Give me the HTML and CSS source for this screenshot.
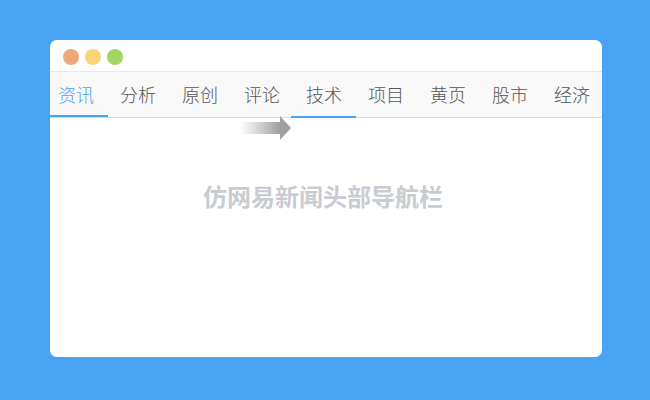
FILE: index.html
```
<!DOCTYPE html>
<html lang="zh-CN">
<head>
    <meta charset="UTF-8">
    <meta name="viewport" content="width=device-width, initial-scale=1.0">
    <title>仿网易新闻头部导航栏</title>
    <link rel="stylesheet" href="styles.css">
</head>
<body>
    <div class="window">
        <div class="title-bar">
            <span class="dot red"></span>
            <span class="dot yellow"></span>
            <span class="dot green"></span>
        </div>
        <nav class="nav">
            <a href="#" class="active">资讯</a>
            <a href="#">分析</a>
            <a href="#">原创</a>
            <a href="#">评论</a>
            <a href="#" class="current">技术
                <svg class="arrow" width="50" height="24" viewBox="0 0 50 24">
                    <defs>
                        <linearGradient id="fade">
                            <stop offset="0" stop-color="#a0a0a0" stop-opacity="0"/>
                            <stop offset="1" stop-color="#a0a0a0"/>
                        </linearGradient>
                    </defs>
                    <rect x="0" y="6" width="39" height="12" fill="url(#fade)"/>
                    <path d="M39 0L50 12L39 24Z" fill="#a0a0a0"/>
                </svg>
            </a>
            <a href="#">项目</a>
            <a href="#">黄页</a>
            <a href="#">股市</a>
            <a href="#">经济</a>
        </nav>
        <main class="content">
            <h1>仿网易新闻头部导航栏</h1>
        </main>
    </div>
</body>
</html>
```
FILE: styles.css
```
* {
    box-sizing: border-box;
}
body {
    margin: 0;
    padding: 40px 48px 43px 50px;
    min-height: 100vh;
    display: flex;
    background: #48a3f3;
    font-family: "Noto Sans CJK SC", sans-serif;
}
.window {
    flex: 1;
    background: #fff;
    border-radius: 7px;
    overflow: hidden;
}
.title-bar {
    display: flex;
    align-items: center;
    gap: 6px;
    height: 31px;
    padding: 3px 13px 0;
}
.dot {
    width: 16px;
    height: 16px;
    border-radius: 50%;
}
.red {
    background: #efa779;
}
.yellow {
    background: #f9d576;
}
.green {
    background: #a4d663;
}
.nav {
    display: flex;
    justify-content: space-between;
    padding: 0 12px 0 8px;
    background: #f9f9f9;
    border-top: 1px solid #e8e8e8;
    border-bottom: 1px solid #dcdcdc;
}
.nav a {
    position: relative;
    font-size: 18px;
    font-weight: 300;
    line-height: 45px;
    color: #555;
    text-decoration: none;
}
.nav a.active {
    color: #48a3f3;
}
/* the line under the chosen item and the one being pointed at */
.nav a.active::after,
.nav a.current::after {
    content: "";
    position: absolute;
    left: -15px;
    right: -14px;
    bottom: 0;
    height: 2px;
    background: #48a3f3;
}
.nav a.current::after {
    bottom: -1px;
}
.arrow {
    position: absolute;
    top: 44px;
    right: 100%;
    margin-right: 15px;
}
.content {
    padding: 60px 20px;
    text-align: center;
}
.content h1 {
    margin: 0 6px 0 0;
    font-size: 24px;
    line-height: 36px;
    font-weight: 700;
    color: #c8ccd1;
}
```
